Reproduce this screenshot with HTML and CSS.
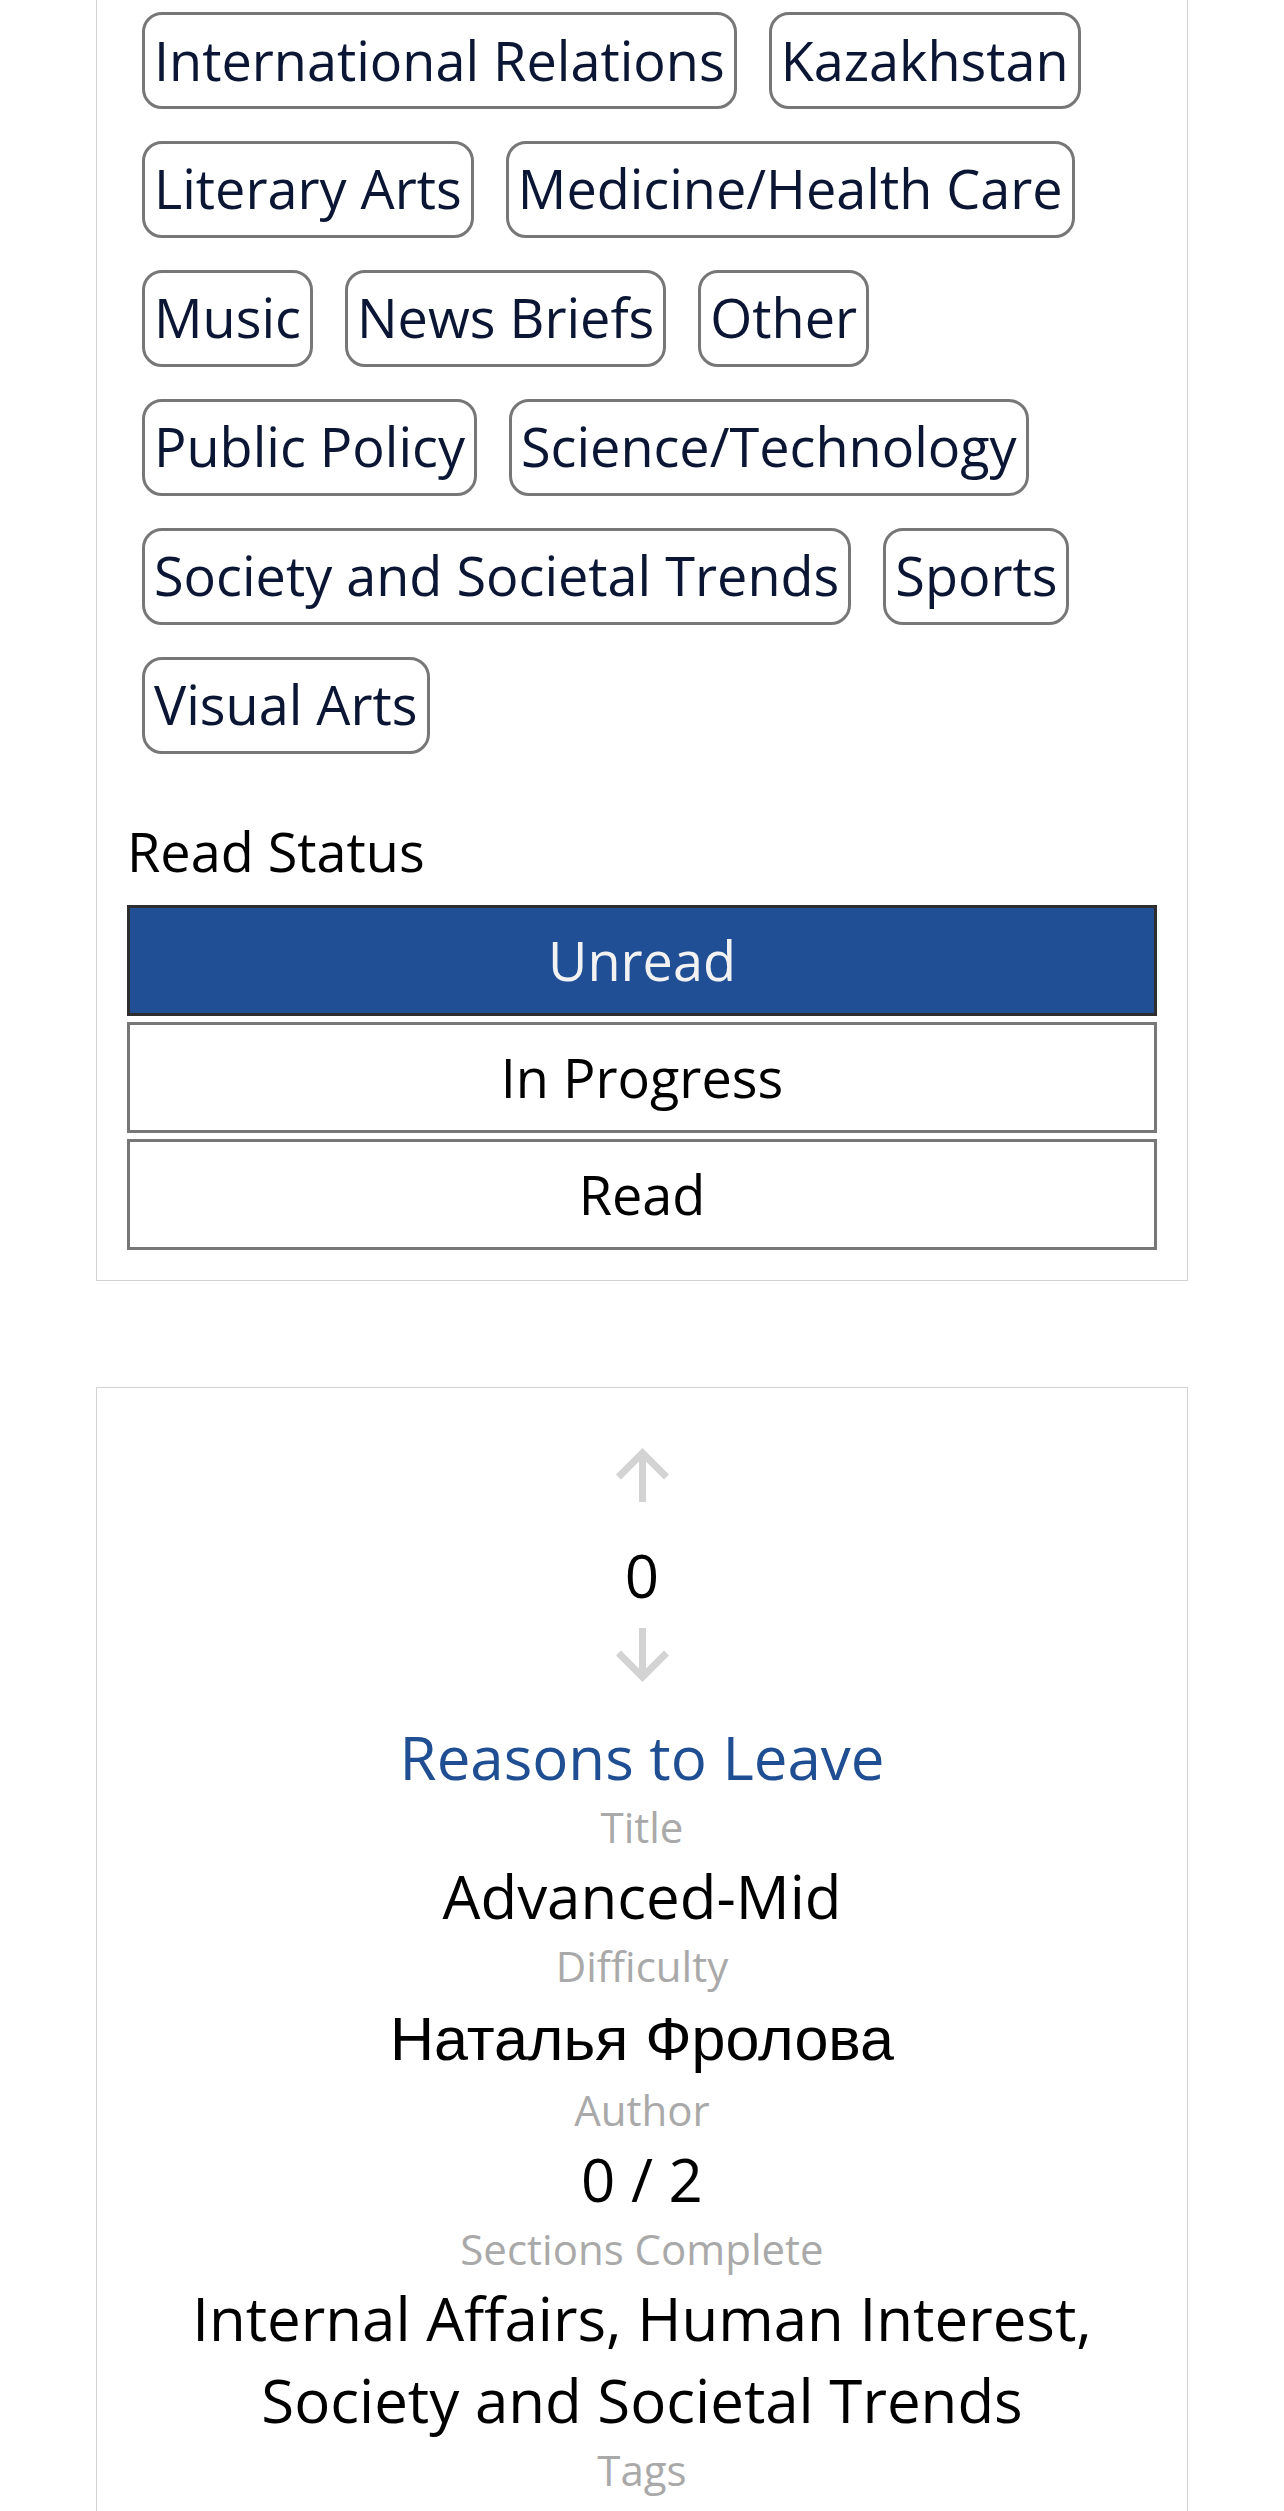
FILE: index.html
```html
<!DOCTYPE html>
<html lang="en">
<head>
<meta charset="utf-8">
<title>Readings</title>
<link rel="stylesheet" href="styles.css">
</head>
<body>
<main class="page">
  <section class="card filters">
    <div class="chips">
      <span class="chip">International Relations</span>
      <span class="chip">Kazakhstan</span>
      <span class="chip">Literary Arts</span>
      <span class="chip">Medicine/Health Care</span>
      <span class="chip">Music</span>
      <span class="chip">News Briefs</span>
      <span class="chip">Other</span>
      <span class="chip">Public Policy</span>
      <span class="chip">Science/Technology</span>
      <span class="chip">Society and Societal Trends</span>
      <span class="chip">Sports</span>
      <span class="chip">Visual Arts</span>
    </div>
    <h3 class="group-label">Read Status</h3>
    <div class="status-list">
      <button class="status active" type="button">Unread</button>
      <button class="status" type="button">In Progress</button>
      <button class="status" type="button">Read</button>
    </div>
  </section>

  <article class="card reading">
    <div class="vote">
      <svg class="vote-arrow up" viewBox="0 0 55 55" width="55" height="55" aria-hidden="true">
        <path d="M27.5 55V6M3.5 30L27.5 6L51.5 30" fill="none" stroke="#d3d3d3" stroke-width="7"/>
      </svg>
      <div class="score">0</div>
      <svg class="vote-arrow down" viewBox="0 0 55 55" width="55" height="55" aria-hidden="true">
        <path d="M27.5 0V49M3.5 25L27.5 49L51.5 25" fill="none" stroke="#d3d3d3" stroke-width="7"/>
      </svg>
    </div>
    <a class="title" href="#">Reasons to Leave</a>
    <div class="label">Title</div>
    <div class="value">Advanced-Mid</div>
    <div class="label">Difficulty</div>
    <div class="value author"><span class="cyr">Наталья Фролова</span></div>
    <div class="label">Author</div>
    <div class="value">0 / 2</div>
    <div class="label">Sections Complete</div>
    <div class="value">Internal Affairs, Human Interest, Society and Societal Trends</div>
    <div class="label">Tags</div>
  </article>
</main>
</body>
</html>
```

FILE: styles.css
```css
html, body {
  margin: 0;
  padding: 0;
  background: #ffffff;
}

body {
  font-family: "Open Sans", "Liberation Sans", sans-serif;
  color: #000;
}

.page {
  padding: 0 96px;
}

.card {
  border: 1px solid #d2d2d2;
  background: #fff;
  padding: 0 30px;
}

/* first card is scrolled: its top lies above the viewport */
.filters {
  margin-top: -60px;
  padding-top: 71px;
  padding-bottom: 30px;
}

.chips {
  display: flex;
  flex-wrap: wrap;
  column-gap: 32px;
  row-gap: 32.4px;
  padding-left: 15px;
}

.chip {
  display: inline-block;
  font-size: 54px;
  line-height: 73.6px;
  padding: 8.5px 9px;
  border: 3px solid #777;
  border-radius: 20px;
  color: #0a1633;
  white-space: nowrap;
}

.group-label {
  font-size: 54px;
  font-weight: 400;
  line-height: 73.6px;
  margin: 61px 0 17px;
  color: #000;
}

.status-list {
  display: flex;
  flex-direction: column;
  gap: 6.6px;
}

.status {
  display: block;
  width: 100%;
  height: 110.6px;
  margin: 0;
  padding: 0;
  border: 3px solid #777;
  background: #fff;
  font-family: inherit;
  font-size: 54px;
  line-height: 73.6px;
  color: #000;
  text-align: center;
}

.status.active {
  background: #214f95;
  border-color: #2e2e2e;
  color: #f2f2f2;
}

.reading {
  margin-top: 106.4px;
  padding-top: 59px;
  padding-bottom: 40px;
  text-align: center;
}

.vote {
  display: flex;
  flex-direction: column;
  align-items: center;
}

.vote-arrow {
  display: block;
}

.score {
  font-size: 60px;
  margin: 32px 0 12px;
}

.vote-arrow.down {
  margin-bottom: 33px;
}

.title {
  display: block;
  font-size: 60px;
  color: #1f4e93;
  text-decoration: none;
}

.label {
  font-size: 42px;
  color: #a9a9a9;
}

.value {
  font-size: 60px;
  color: #000;
}

.value.author {
  padding: 2px 0 3px;
}

.cyr {
  font-family: "Liberation Sans", Arial, sans-serif;
  font-size: 61px;
}
```
